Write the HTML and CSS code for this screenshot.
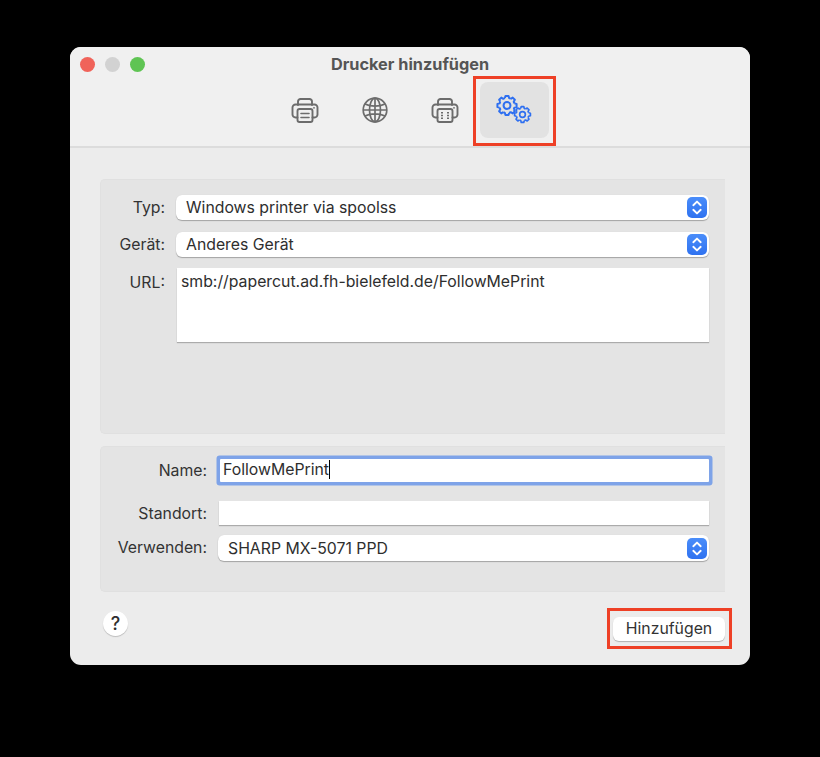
FILE: index.html
```html
<!DOCTYPE html>
<html lang="de">
<head>
<meta charset="utf-8">
<title>Drucker hinzufügen</title>
<link rel="stylesheet" href="styles.css">
</head>
<body>
<svg class="defs" width="0" height="0" aria-hidden="true">
  <defs>
    <path id="seg" d="M-2.2-7.7-1.6-10H1.6L2.2-7.7A8 8 0 0 1 3.9-7"/>
    <symbol id="gear" viewBox="-12 -12 24 24" overflow="visible">
      <g fill="none" stroke="currentColor" stroke-width="2.1" stroke-linejoin="round">
        <use href="#seg"/>
        <use href="#seg" transform="rotate(45)"/>
        <use href="#seg" transform="rotate(90)"/>
        <use href="#seg" transform="rotate(135)"/>
        <use href="#seg" transform="rotate(180)"/>
        <use href="#seg" transform="rotate(225)"/>
        <use href="#seg" transform="rotate(270)"/>
        <use href="#seg" transform="rotate(315)"/>
        <circle r="3.6"/>
      </g>
    </symbol>
    <symbol id="stepper" viewBox="0 0 19 21">
      <path d="M5.8 8.2 9.5 4.6l3.7 3.6M5.8 12.8l3.7 3.6 3.7-3.6" fill="none" stroke="#fff" stroke-width="1.9" stroke-linecap="round" stroke-linejoin="round"/>
    </symbol>
  </defs>
</svg>
<main class="window">
  <header class="titlebar">
    <div class="traffic">
      <span class="light red"></span>
      <span class="light grey"></span>
      <span class="light green"></span>
    </div>
    <h1 class="title">Drucker hinzufügen</h1>
    <nav class="tabs">
      <div class="tab">
        <svg class="icon" width="28" height="28" viewBox="0 0 28 28" fill="none" stroke="currentColor" stroke-width="1.9" stroke-linejoin="round" stroke-linecap="round">
          <path d="M7 9V5.5A2.5 2.5 0 0 1 9.500 3h9A2.500 2.500 0 0 1 21 5.500V9"/>
          <path d="M6.500 21.500H4.500A3 3 0 0 1 1.500 18.500V11.500A3 3 0 0 1 4.500 8.500h19a3 3 0 0 1 3 3v7a3 3 0 0 1-3 3h-2"/>
          <rect x="6.500" y="13" width="15" height="13" rx="2"/>
          <path d="M10 17.500h8M10 21.500h8" stroke-width="1.600"/>
          <circle cx="23" cy="11.800" r=".9" fill="currentColor" stroke="none"/>
        </svg>
      </div>
      <div class="tab">
        <svg class="icon" width="28" height="28" viewBox="0 0 28 28" fill="none" stroke="currentColor" stroke-width="1.700">
          <circle cx="14" cy="14" r="11.800"/>
          <ellipse cx="14" cy="14" rx="5.500" ry="11.800"/>
          <path d="M14 2.200V25.800M2.200 14H25.800M4 8c5.500 2.800 14.500 2.800 20 0M4 20c5.500-2.800 14.500-2.800 20 0"/>
        </svg>
      </div>
      <div class="tab">
        <svg class="icon" width="28" height="28" viewBox="0 0 28 28" fill="none" stroke="currentColor" stroke-width="1.900" stroke-linejoin="round" stroke-linecap="round">
          <path d="M7 9V5.500A2.500 2.500 0 0 1 9.500 3h9A2.500 2.500 0 0 1 21 5.500V9"/>
          <path d="M6.500 21.500H4.500A3 3 0 0 1 1.500 18.500V11.500A3 3 0 0 1 4.500 8.500h19a3 3 0 0 1 3 3v7a3 3 0 0 1-3 3h-2"/>
          <rect x="6.500" y="13" width="15" height="13" rx="2"/>
          <path d="M11 16v7M17 16v7" stroke-width="2" stroke-dasharray="1.500 1.300" stroke-linecap="butt"/>
          <circle cx="23" cy="11.800" r=".9" fill="currentColor" stroke="none"/>
        </svg>
      </div>
      <div class="tab tab-active">
        <svg class="gears" width="36" height="30" viewBox="0 0 36 30">
          <use href="#gear" x="-0.500" y="0" width="23" height="23"/>
          <use href="#gear" x="17" y="11" width="19" height="19"/>
        </svg>
        <span class="mark mark-tab"></span>
      </div>
    </nav>
  </header>

  <section class="panel panel-top">
    <div class="form form-top">
      <label class="lbl">Typ:</label>
      <div class="select"><span>Windows printer via spoolss</span><svg class="step" width="20" height="21"><use href="#stepper"/></svg></div>
      <label class="lbl">Gerät:</label>
      <div class="select"><span>Anderes Gerät</span><svg class="step" width="20" height="21"><use href="#stepper"/></svg></div>
      <label class="lbl lbl-url">URL:</label>
      <div class="field field-url">smb://papercut.ad.fh-bielefeld.de/FollowMePrint</div>
    </div>
  </section>

  <section class="panel panel-bottom">
    <div class="form form-bottom">
      <label class="lbl lbl-name">Name:</label>
      <div class="field field-name"><span class="caret">FollowMePrint</span></div>
      <label class="lbl">Standort:</label>
      <div class="field field-place"></div>
      <label class="lbl">Verwenden:</label>
      <div class="select select-use"><span>SHARP MX-5071 PPD</span><svg class="step" width="20" height="21"><use href="#stepper"/></svg></div>
    </div>
  </section>

  <footer class="footer">
    <button class="help" type="button">?</button>
    <button class="add" type="button">Hinzufügen<span class="mark mark-add"></span></button>
  </footer>
</main>
</body>
</html>
```
FILE: styles.css
```css
* { box-sizing: border-box; }
html, body { margin: 0; height: 100%; background: #000; overflow: hidden; }
body {
  padding: 47px 70px 0;
  font-family: "Inter", "Liberation Sans", sans-serif;
  font-size: 15.8px;
  color: #2e2e2e;
}
.defs { position: absolute; }

.window {
  width: 680px;
  height: 618px;
  background: #ececec;
  border-radius: 11px;
  overflow: hidden;
  display: flex;
  flex-direction: column;
}

.titlebar {
  height: 101px;
  background: #f0f0f0;
  border-bottom: 2px solid #dcdcdc;
  position: relative;
  flex: none;
}
.traffic {
  position: absolute;
  left: 10px;
  top: 10px;
  display: flex;
  gap: 10px;
}
.light { width: 15px; height: 15px; border-radius: 50%; }
.red { background: #f0635a; }
.grey { background: #d2d2d2; }
.green { background: #5fc453; }
.title {
  margin: 0;
  padding-top: 7px;
  text-align: center;
  font-size: 16.3px;
  line-height: 20px;
  font-weight: 700;
  color: #555;
}
.tabs {
  display: flex;
  justify-content: center;
  margin-top: 8px;
  padding-right: 2px;
  height: 56px;
}
.tab {
  width: 70px;
  height: 56px;
  display: flex;
  align-items: center;
  justify-content: center;
  border-radius: 8px;
  color: #6c6c6c;
  position: relative;
}
.icon { margin-top: -1px; }
.tab-active { background: #e2e2e2; color: #2e6ff0; width: 69px; }
.gears { margin-top: -2px; }

.mark { position: absolute; border: 3px solid #ee4026; pointer-events: none; }
.mark-tab { left: -7px; top: -6px; width: 83px; height: 70px; }
.mark-add { left: -6px; top: -9px; width: 125px; height: 41px; }

.panel {
  margin-left: 30px;
  width: 625px;
  background: #e4e4e4;
  border: 1px solid #e0e0e0;
  border-right: 0;
  border-radius: 5px 0 0 5px;
  flex: none;
}
.panel-top { height: 255px; margin-top: 31px; padding: 15px 16px 0 0; }
.panel-bottom { height: 146px; margin-top: 12px; padding: 9px 16px 0 0; }

.form { display: grid; align-items: start; }
.form-top { grid-template-columns: 64px 1fr; column-gap: 11px; row-gap: 12px; }
.form-bottom { grid-template-columns: 106px 1fr; column-gap: 11px; }

.lbl {
  text-align: right;
  line-height: 25px;
  color: #333;
  white-space: nowrap;
}
.lbl-url { line-height: 27px; }
.lbl-name { padding-top: 2px; }

.select {
  height: 25px;
  background: #fff;
  border-radius: 6px;
  box-shadow: 0 1px 1px rgba(0, 0, 0, .28), 0 0 1px rgba(0, 0, 0, .1);
  display: flex;
  align-items: center;
  justify-content: space-between;
  padding: 0 2px 0 10px;
}
.step {
  background: linear-gradient(#4a8dfa, #2f72f0);
  border-radius: 5px;
  flex: none;
}
.field {
  background: #fff;
  box-shadow: 0 1px 1px rgba(0, 0, 0, .25);
  line-height: 28px;
  padding-left: 4px;
}
.field-url { height: 74px; margin: -1px 0 0 1px; }
.field-name {
  height: 23px;
  margin: 3px 0 19px 2px;
  line-height: 22px;
  padding-left: 3px;
  box-shadow: 0 0 0 3.5px #7ea3e8;
  border-radius: 1px;
}
.caret { border-right: 1px solid #000; }
.field-place { height: 24px; margin: 0 0 10px 1px; }
.select-use { height: 26px; }

.footer {
  display: flex;
  align-items: flex-start;
  justify-content: space-between;
  padding: 19px 25px 0 33px;
}
.help {
  width: 25px;
  height: 25px;
  padding: 0;
  border: 0;
  border-radius: 50%;
  background: #fff;
  box-shadow: 0 1px 1px rgba(0, 0, 0, .2);
  font: 500 18px/25px "Inter", "Liberation Sans", sans-serif;
  color: #2e2e2e;
}
.add {
  position: relative;
  width: 112px;
  height: 24px;
  margin-top: 6px;
  padding: 0;
  border: 0;
  border-radius: 6px;
  background: #fff;
  box-shadow: 0 1px 1px rgba(0, 0, 0, .25);
  font: 15.8px/24px "Inter", "Liberation Sans", sans-serif;
  color: #333;
}
```
